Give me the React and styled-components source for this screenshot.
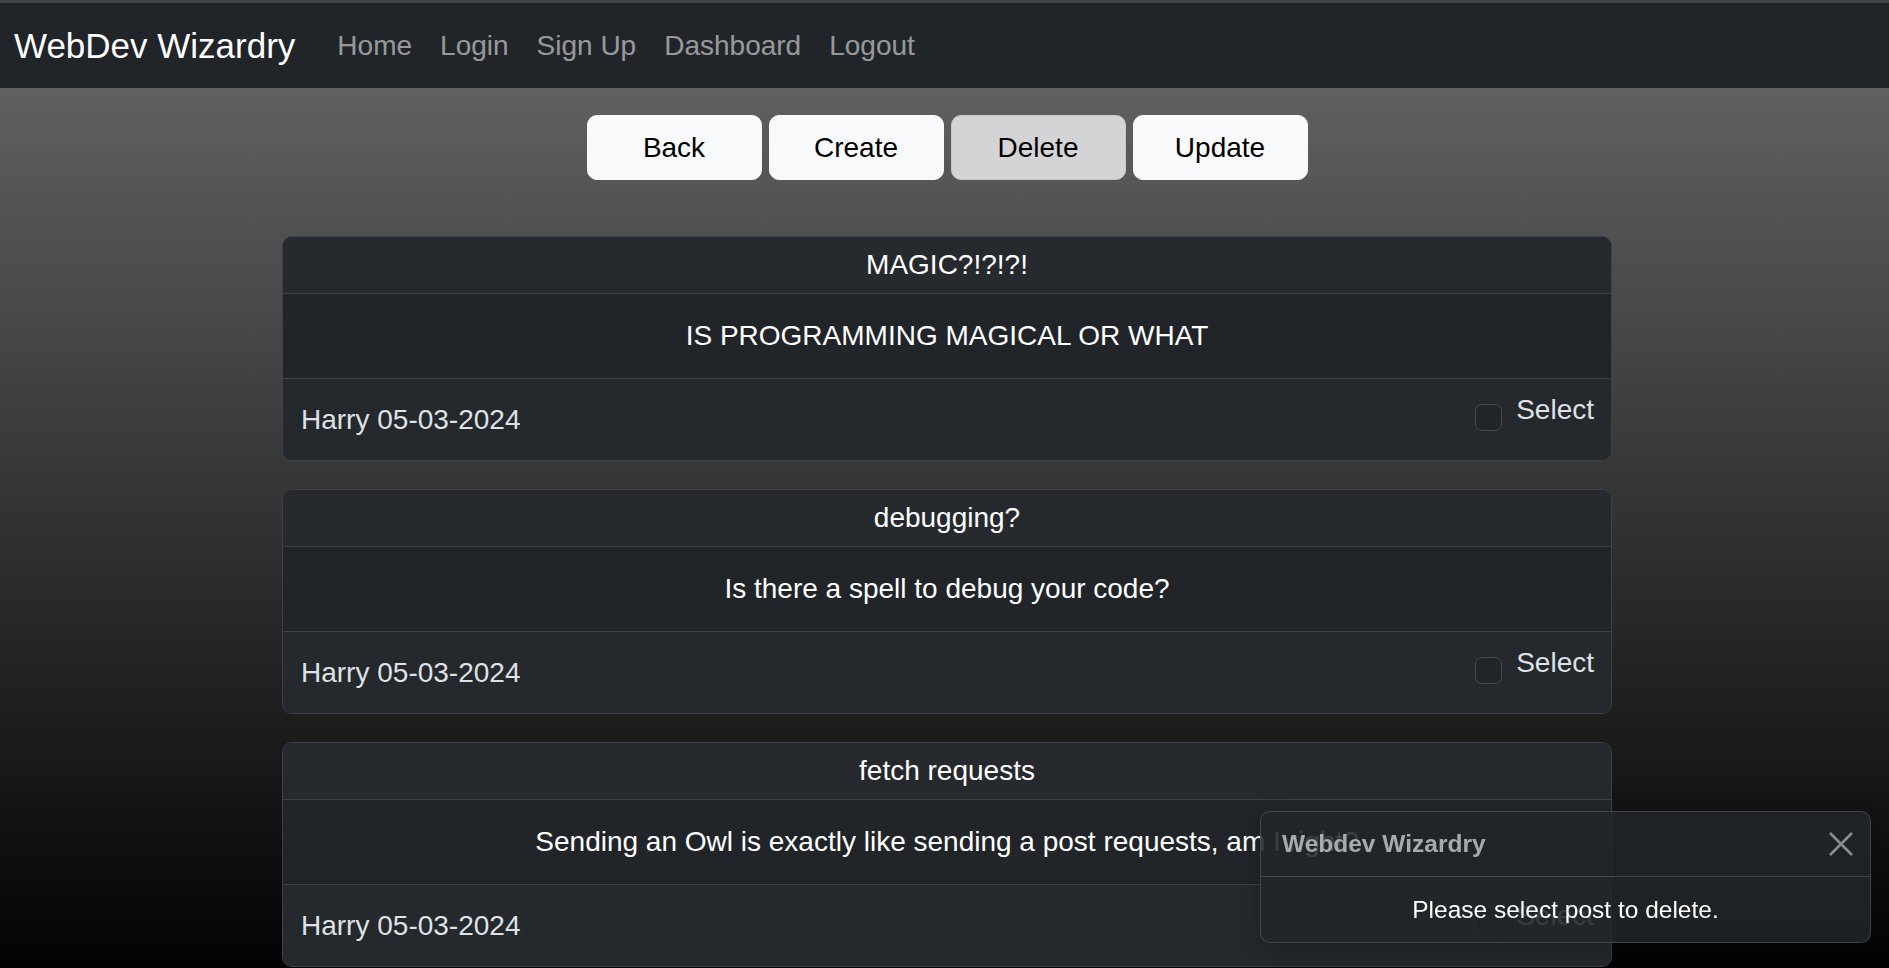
import React from "react";
import styled, { createGlobalStyle } from "styled-components";

const GlobalStyle = createGlobalStyle`
  html, body {
    margin: 0;
    padding: 0;
    background: #000;
    font-family: "Liberation Sans", Arial, sans-serif;
  }
  * {
    box-sizing: border-box;
  }
`;

const posts = [
  {
    id: 1,
    title: "MAGIC?!?!?!",
    body: "IS PROGRAMMING MAGICAL OR WHAT",
    author: "Harry",
    date: "05-03-2024",
  },
  {
    id: 2,
    title: "debugging?",
    body: "Is there a spell to debug your code?",
    author: "Harry",
    date: "05-03-2024",
  },
  {
    id: 3,
    title: "fetch requests",
    body: "Sending an Owl is exactly like sending a post requests, am I right?",
    author: "Harry",
    date: "05-03-2024",
  },
];

const Page = styled.div`
  height: 100vh;
  overflow: hidden;
  display: flex;
  flex-direction: column;
  padding-top: 3px;
  background: #444;
`;

const Navbar = styled.nav`
  flex: none;
  height: 85px;
  display: flex;
  align-items: center;
  padding: 0 14px;
  background: #212529;
`;

const Brand = styled.a`
  font-size: 35px;
  color: #fff;
  margin-right: 28px;
  text-decoration: none;
`;

const NavLink = styled.a`
  font-size: 28px;
  color: rgba(255, 255, 255, 0.55);
  padding: 0 14px;
  text-decoration: none;
`;

const Main = styled.main`
  flex: 1;
  display: flex;
  flex-direction: column;
  align-items: center;
  padding: 27px 0 0 5px;
  background: linear-gradient(#606060, #000);
`;

const ButtonRow = styled.div`
  display: flex;
  gap: 7px;
  margin-bottom: 56px;
`;

const Button = styled.button`
  width: 175px;
  height: 65px;
  font-family: inherit;
  font-size: 28px;
  color: #000;
  background: ${(p) => (p.$active ? "#d3d4d5" : "#f8f9fa")};
  border: 1px solid ${(p) => (p.$active ? "#c6c7c8" : "#f8f9fa")};
  border-radius: 10px;
  cursor: pointer;
`;

const Card = styled.div`
  width: 1330px;
  flex: none;
  margin-bottom: 28px;
  border: 1px solid #3e4145;
  border-radius: 10px;
  overflow: hidden;
  background: #212529;
`;

const CardHeader = styled.div`
  padding: 11px 28px;
  line-height: 34px;
  font-size: 28px;
  text-align: center;
  color: #fff;
  background: #26292d;
  border-bottom: 1px solid #3e4145;
`;

const CardBody = styled.div`
  padding: 25px 28px;
  line-height: 34px;
  font-size: 28px;
  text-align: center;
  color: #fff;
  white-space: nowrap;
  border-bottom: 1px solid #3e4145;
`;

const CardFooter = styled.div`
  height: 81px;
  display: flex;
  justify-content: space-between;
  align-items: center;
  padding: 0 17px 0 18px;
  font-size: 28px;
  color: #dee2e6;
  background: #25282c;
`;

const SelectGroup = styled.label`
  align-self: flex-start;
  margin-top: 14px;
  display: flex;
  align-items: flex-start;
  gap: 14px;
  line-height: 34px;
`;

const Checkbox = styled.span`
  width: 27px;
  height: 27px;
  margin-top: 11px;
  border: 1px solid #45484c;
  border-radius: 7px;
  background: #212529;
`;

const Toast = styled.div`
  position: fixed;
  right: 18px;
  bottom: 25px;
  width: 611px;
  border: 1px solid rgba(255, 255, 255, 0.15);
  border-radius: 10px;
  background: rgba(33, 37, 41, 0.88);
  box-shadow: 0 8px 24px rgba(0, 0, 0, 0.2);
  overflow: hidden;
`;

const ToastHeader = styled.div`
  height: 65px;
  display: flex;
  align-items: center;
  justify-content: space-between;
  padding: 0 16px 0 21px;
  border-bottom: 1px solid rgba(255, 255, 255, 0.15);
  font-size: 24.5px;
  font-weight: 700;
  color: #a7abb0;
`;

const CloseButton = styled.button`
  width: 26px;
  height: 26px;
  padding: 0;
  border: 0;
  background: none;
  display: flex;
  cursor: pointer;
`;

const ToastBody = styled.div`
  height: 65px;
  display: flex;
  align-items: center;
  justify-content: center;
  font-size: 24.5px;
  color: #fff;
`;

const App = () => {
  return (
    <>
      <GlobalStyle />
      <Page>
        <Navbar>
          <Brand href="#">WebDev Wizardry</Brand>
          <NavLink href="#">Home</NavLink>
          <NavLink href="#">Login</NavLink>
          <NavLink href="#">Sign Up</NavLink>
          <NavLink href="#">Dashboard</NavLink>
          <NavLink href="#">Logout</NavLink>
        </Navbar>
        <Main>
          <ButtonRow>
            <Button>Back</Button>
            <Button>Create</Button>
            <Button $active>Delete</Button>
            <Button>Update</Button>
          </ButtonRow>
          {posts.map((post) => (
            <Card key={post.id}>
              <CardHeader>{post.title}</CardHeader>
              <CardBody>{post.body}</CardBody>
              <CardFooter>
                <span>
                  {post.author} {post.date}
                </span>
                <SelectGroup>
                  <Checkbox />
                  Select
                </SelectGroup>
              </CardFooter>
            </Card>
          ))}
        </Main>
      </Page>
      <Toast>
        <ToastHeader>
          <span>Webdev Wizardry</span>
          <CloseButton aria-label="Close">
            <svg width="26" height="26" viewBox="0 0 26 26">
              <path
                d="M2 2 L24 24 M24 2 L2 24"
                stroke="#8a8c8f"
                strokeWidth="2.6"
                fill="none"
              />
            </svg>
          </CloseButton>
        </ToastHeader>
        <ToastBody>Please select post to delete.</ToastBody>
      </Toast>
    </>
  );
};

export default App;
